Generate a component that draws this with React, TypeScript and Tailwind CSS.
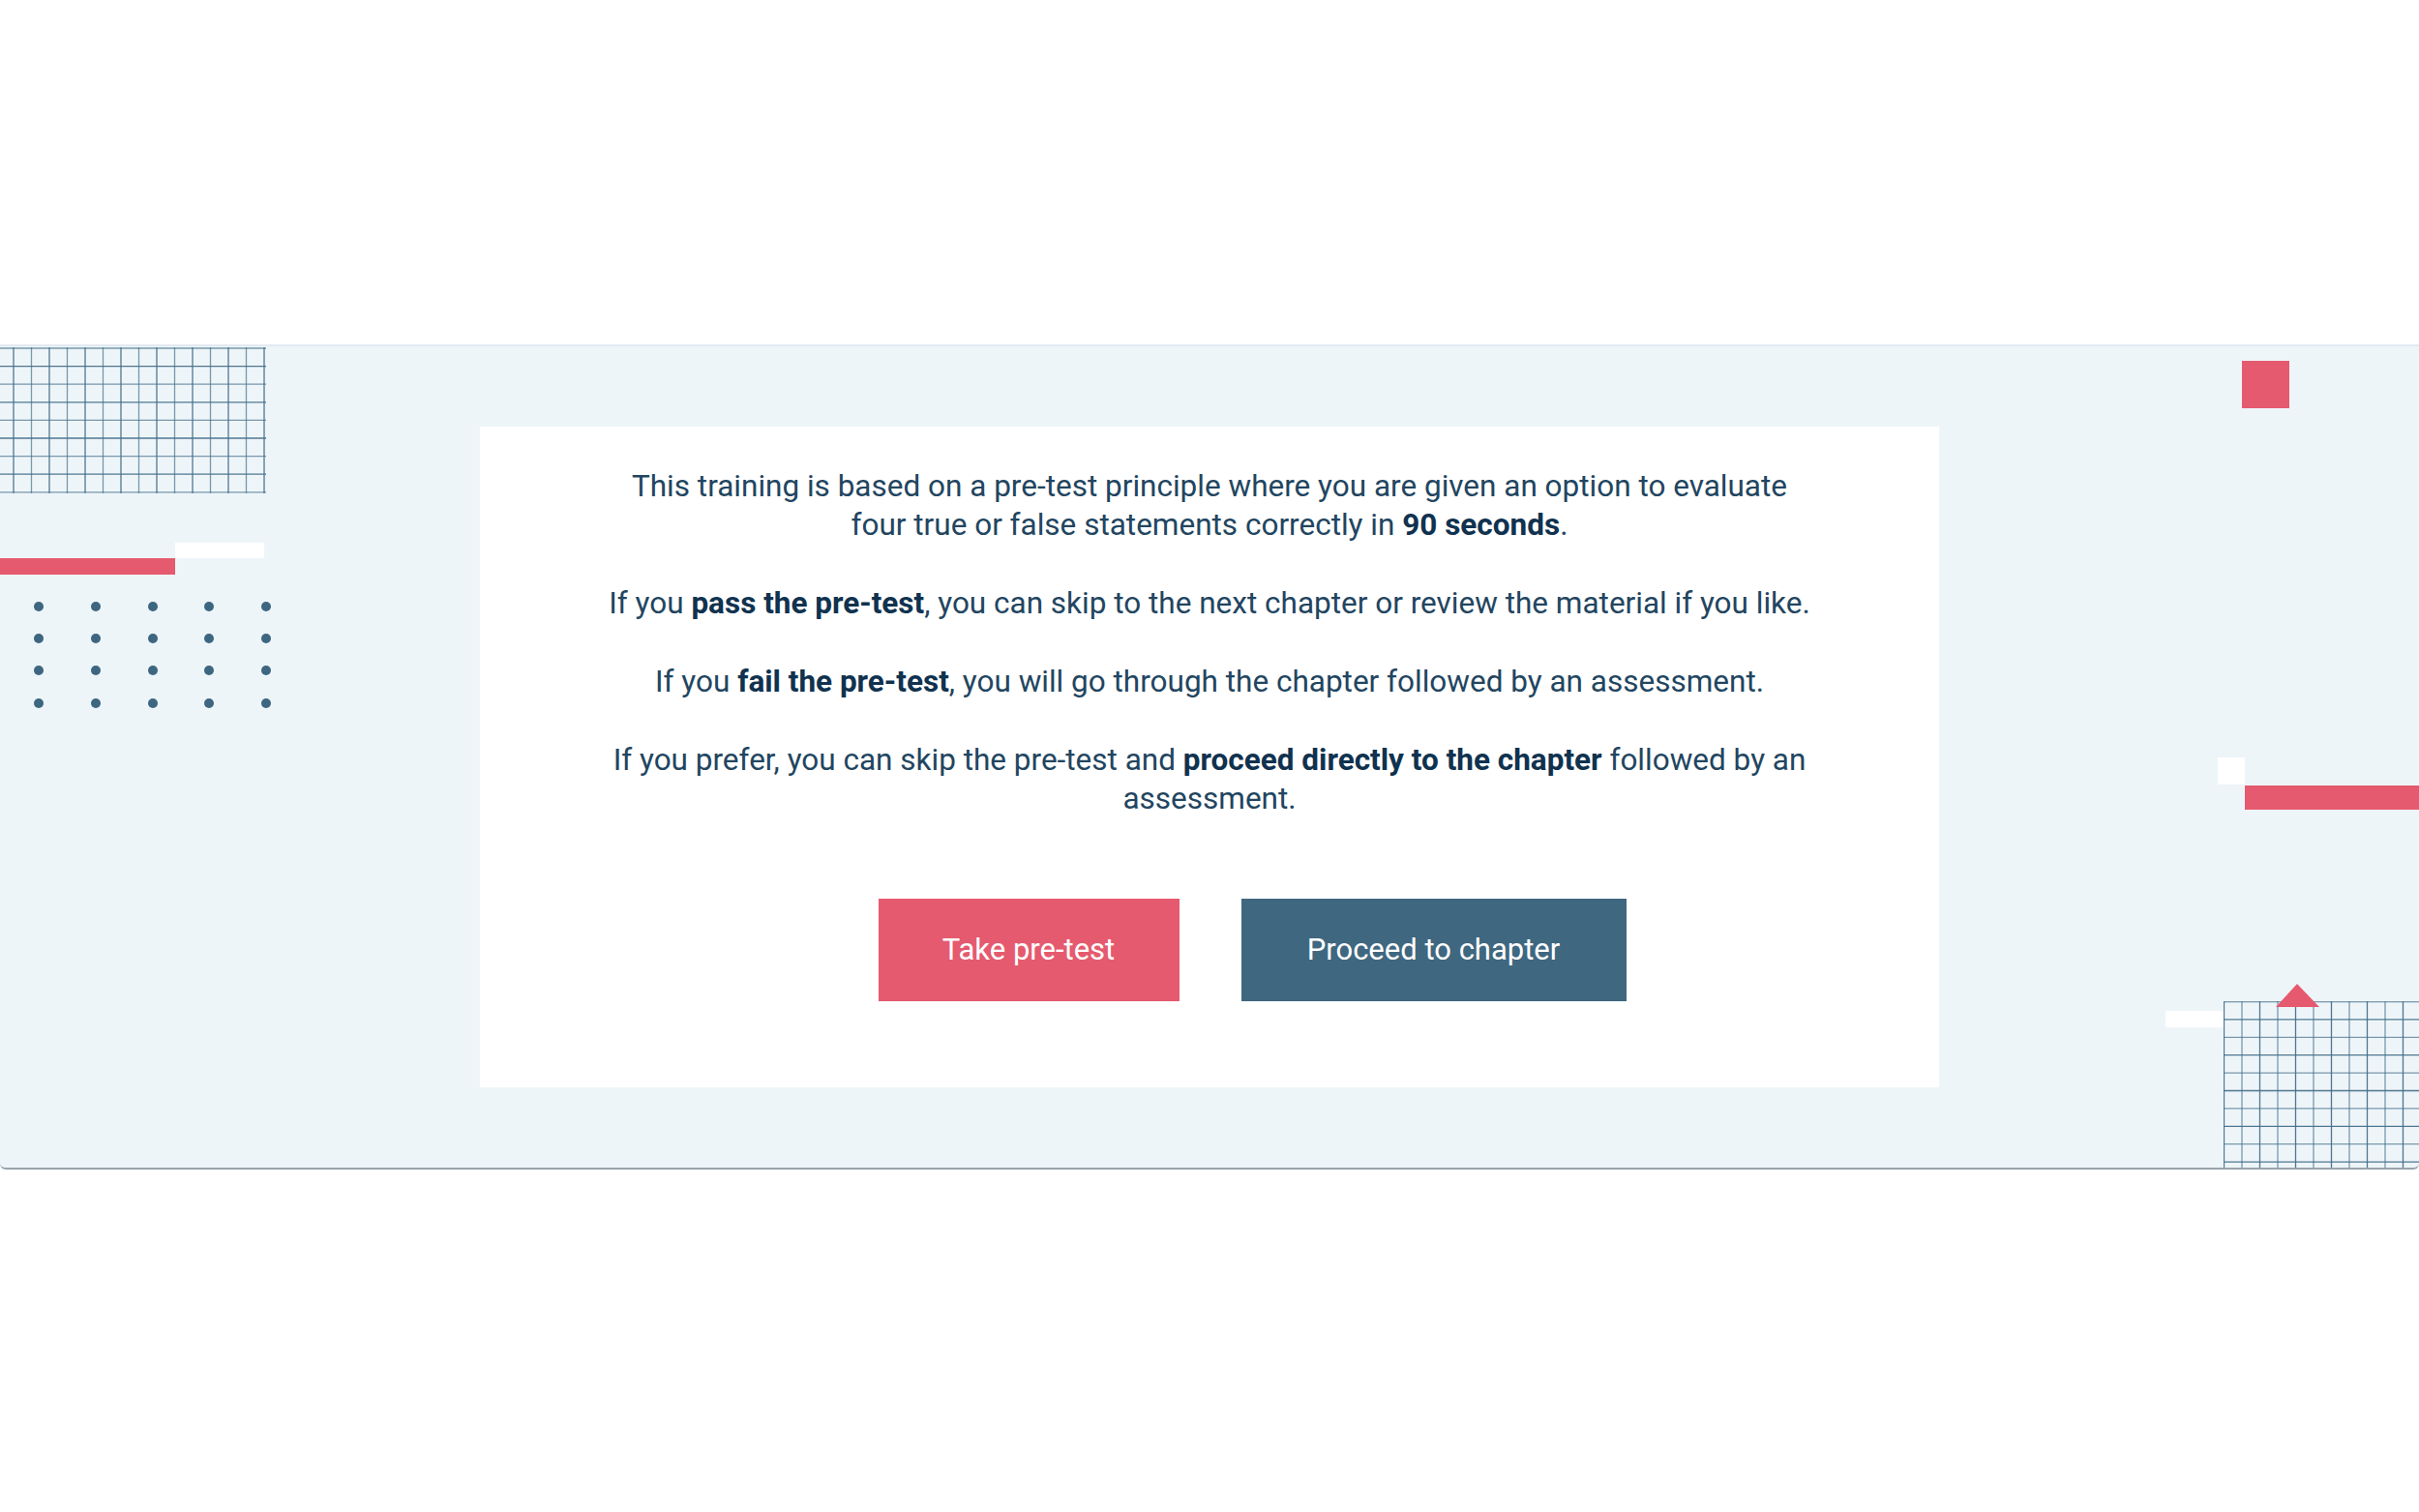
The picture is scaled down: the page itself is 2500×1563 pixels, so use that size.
import React from "react";

const RED = "#e55a6e";

function GridPattern({
  width,
  height,
  xs,
  ys,
}: {
  width: number;
  height: number;
  xs: number[];
  ys: number[];
}) {
  return (
    <svg width={width} height={height} viewBox={`0 0 ${width} ${height}`} className="block">
      {xs.map((x, i) => (
        <line
          key={`v${i}`}
          x1={x}
          y1={0}
          x2={x}
          y2={height}
          stroke="#46708b"
          strokeWidth={1.3}
          strokeOpacity={i % 2 === 0 ? 0.95 : 0.7}
        />
      ))}
      {ys.map((y, i) => (
        <line
          key={`h${i}`}
          x1={0}
          y1={y}
          x2={width}
          y2={y}
          stroke="#46708b"
          strokeWidth={1.3}
          strokeOpacity={i % 2 === 0 ? 0.7 : 0.95}
        />
      ))}
    </svg>
  );
}

function DotField() {
  const cols = [5, 64, 123, 181, 240];
  const rows = [5, 38, 71, 105];
  return (
    <svg width={250} height={112} viewBox="0 0 250 112" className="block">
      {rows.map((y) =>
        cols.map((x) => <circle key={`${x}-${y}`} cx={x} cy={y} r={5} fill="#3d6680" />)
      )}
    </svg>
  );
}

const range = (start: number, step: number, count: number) =>
  Array.from({ length: count }, (_, i) => Math.round((start + i * step) * 10) / 10);

const Strong = ({ children }: { children: React.ReactNode }) => (
  <strong className="font-bold text-[#10324f]">{children}</strong>
);

export default function App() {
  return (
    <div
      className="min-h-screen bg-white pt-[356px]"
      style={{ fontFamily: "Roboto, 'Liberation Sans', sans-serif" }}
    >
      <section className="relative h-[853px] overflow-hidden rounded-b-[6px] border-t-2 border-b-2 border-t-[#e2ebf2] border-b-[#98a3ab] bg-[#eef5f9] pt-[83px]">
        {/* left ornaments: grid, split bar, dot field */}
        <div className="absolute left-0 top-[1px] flex flex-col items-start">
          <GridPattern width={275} height={151} xs={range(14, 18.5, 15)} ys={range(1, 18.6, 9)} />
          <div className="ml-[181px] mt-[51px] h-[16px] w-[92px] bg-white" />
          <div className="h-[17px] w-[181px] bg-[#e55a6e]" />
          <div className="ml-[35px] mt-[28px]">
            <DotField />
          </div>
        </div>

        {/* right ornaments: square, split bar, triangle over grid */}
        <div className="absolute right-0 top-[15px] flex w-[262px] flex-col items-start">
          <div className="ml-[79px] h-[49px] w-[49px] bg-[#e55a6e]" />
          <div className="ml-[54px] mt-[361px] h-[28px] w-[28px] bg-white" />
          <div className="ml-[82px] mt-[1px] h-[25px] w-[180px] bg-[#e55a6e]" />
          <div className="mt-[180px] flex items-start">
            <div className="mt-[28px] h-[17px] w-[60px] bg-white" />
            <div className="flex flex-col">
              <svg className="relative z-10 ml-[54px] block" width={45} height={24} viewBox="0 0 45 24">
                <polygon points="22,0 45,24 0,24" fill={RED} />
              </svg>
              <div className="-mt-[6px]">
                <GridPattern width={202} height={175} xs={range(0.5, 18.5, 11)} ys={range(0.5, 18.4, 10)} />
              </div>
            </div>
          </div>
        </div>

        {/* content card */}
        <div className="mx-auto w-[1508px] bg-white pt-[42px] pb-[89px]">
          <div className="flex flex-col gap-[41px] text-center text-[31.5px] leading-[40px] text-[#224560]">
            <p>
              This training is based on a pre-test principle where you are given an option to evaluate
              <br />
              four true or false statements correctly in <Strong>90 seconds</Strong>.
            </p>
            <p>
              If you <Strong>pass the pre-test</Strong>, you can skip to the next chapter or review the
              material if you like.
            </p>
            <p>
              If you <Strong>fail the pre-test</Strong>, you will go through the chapter followed by an
              assessment.
            </p>
            <p>
              If you prefer, you can skip the pre-test and <Strong>proceed directly to the chapter</Strong>{" "}
              followed by an
              <br />
              assessment.
            </p>
          </div>

          <div className="mt-[83px] flex justify-center gap-[64px] pl-[88px]">
            <button type="button" className="h-[106px] w-[311px] bg-[#e55a6e] text-[31px] text-white">
              Take pre-test
            </button>
            <button type="button" className="h-[106px] w-[398px] bg-[#3f6780] text-[31px] text-white">
              Proceed to chapter
            </button>
          </div>
        </div>
      </section>
    </div>
  );
}
